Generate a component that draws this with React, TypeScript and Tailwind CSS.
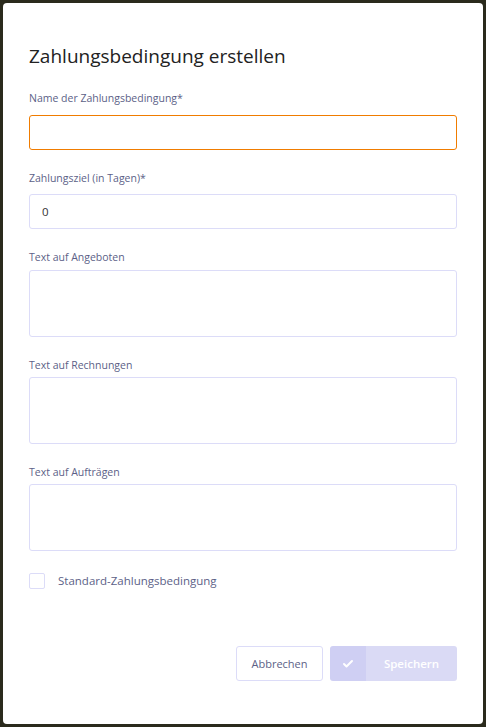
import { Check } from 'lucide-react'

const font = { fontFamily: '"Open Sans", "Noto Sans", sans-serif' }

function Label({ children, className = '' }: { children: React.ReactNode; className?: string }) {
  return <label className={`block h-4 text-[10.5px] leading-4 text-[#5c5f87] ${className}`}>{children}</label>
}

export default function App() {
  return (
    <div className="h-[727px] bg-[#2a2a1c] p-[3px]" style={font}>
      <div className="flex h-full flex-col rounded-[4px] bg-white px-[26px]">
        <h2 className="mt-[39px] text-[19px] leading-7 text-[#222]">Zahlungsbedingung erstellen</h2>

        <Label className="mt-5">Name der Zahlungsbedingung*</Label>
        <input className="mt-[9px] h-[35px] w-full rounded-[3px] border border-[#f07c00] px-3 text-[12px] outline-none" />

        <Label className="mt-5">Zahlungsziel (in Tagen)*</Label>
        <input
          defaultValue="0"
          className="mt-2 h-[35px] w-full rounded-[3px] border border-[#dcdcf8] px-3 text-[11.5px] text-[#333] outline-none"
        />

        <Label className="mt-5">Text auf Angeboten</Label>
        <textarea className="mt-[5px] h-[67px] w-full resize-none rounded-[3px] border border-[#dcdcf8] outline-none" />

        <Label className="mt-5">Text auf Rechnungen</Label>
        <textarea className="mt-1 h-[67px] w-full resize-none rounded-[3px] border border-[#dcdcf8] outline-none" />

        <Label className="mt-5">Text auf Aufträgen</Label>
        <textarea className="mt-1 h-[67px] w-full resize-none rounded-[3px] border border-[#dcdcf8] outline-none" />

        <div className="mt-[21px] flex items-center gap-[13px]">
          <span className="h-4 w-4 rounded-[2px] border border-[#dcdcf8]" />
          <span className="text-[11.5px] text-[#5c5f87]">Standard-Zahlungsbedingung</span>
        </div>

        <div className="mt-[57px] flex justify-end gap-[7px]">
          <button className="h-[35px] w-[87px] rounded-[3px] border border-[#dcdcf8] text-[11px] text-[#5c5f87]">
            Abbrechen
          </button>
          <button className="flex h-[35px] w-[127px] overflow-hidden rounded-[3px] text-[11.5px] font-semibold text-white">
            <span className="flex w-9 items-center justify-center bg-[#cfcff3]">
              <Check className="h-3 w-3" strokeWidth={4} />
            </span>
            <span className="flex flex-1 items-center justify-center bg-[#dadaf5]">Speichern</span>
          </button>
        </div>
      </div>
    </div>
  )
}
